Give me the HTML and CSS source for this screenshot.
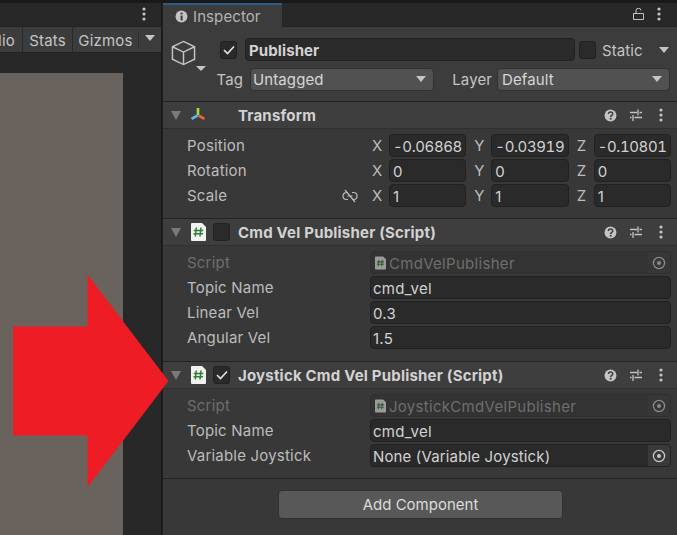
FILE: index.html
```html
<!DOCTYPE html>
<html lang="en">
  <head>
    <meta charset="UTF-8" />
    <title>Inspector</title>
    <link rel="stylesheet" href="styles.css">
  </head>
  <body>
    <svg class="defs">
      <symbol id="kebab" viewBox="0 0 12 16"><circle cx="6" cy="3" r="1.6"/><circle cx="6" cy="8" r="1.6"/><circle cx="6" cy="13" r="1.6"/></symbol>
      <symbol id="sliders" viewBox="0 0 14 14"><path d="M1 4.500h7M10.500 4.500h2.500M9 1.500v6M1 9.500h1.500M5.500 9.500h7.500M4 7v6" fill="none" stroke="currentColor" stroke-width="1.300"/></symbol>
      <symbol id="help" viewBox="0 0 14 14"><circle cx="7" cy="7" r="6.400"/><path d="M4.800 5.500c0-3 4.600-3 4.600-.2 0 1.600-2.200 1.700-2.200 3.200" fill="none" stroke="#3e3e3e" stroke-width="1.700"/><rect x="6.200" y="9.500" width="2" height="1.900" fill="#3e3e3e"/></symbol>
      <symbol id="target" viewBox="0 0 14 14"><circle cx="7" cy="7" r="5.600" fill="none" stroke="currentColor" stroke-width="1.300"/><circle cx="7" cy="7" r="2"/></symbol>
      <symbol id="script" viewBox="0 0 15 18"><path d="M1 0h10l4 4v13a1 1 0 0 1-1 1H1a1 1 0 0 1-1-1V1a1 1 0 0 1 1-1z" fill="#f1f1ee"/><path d="M5.300 4.500l-1 9M10 4.500l-1 9M2.800 7.400h9.500M2.500 10.800h9.500" fill="none" stroke="#2f7d3a" stroke-width="1.500"/></symbol>
    </svg>

    <div class="scene-panel">
      <div class="tab-strip">
        <svg class="kebab-icon"><use href="#kebab"/></svg>
      </div>
      <div class="game-bar">
        <span class="bar-btn audio">dio</span>
        <span class="bar-btn stats">Stats</span>
        <span class="bar-btn gizmos">Gizmos</span>
        <span class="bar-sep"></span>
        <span class="bar-arrow"><i class="tri"></i></span>
      </div>
      <div class="game-view">
        <div class="game-image"></div>
      </div>
    </div>

    <div class="inspector">
      <div class="tab-strip">
        <div class="tab">
          <svg class="info-icon" viewBox="0 0 14 14"><circle cx="7" cy="7" r="6.400"/><rect x="6" y="2.800" width="2.200" height="2" fill="#3c3c3c"/><rect x="6" y="6" width="2.200" height="5.200" fill="#3c3c3c"/></svg>
          <span>Inspector</span>
        </div>
        <div class="tab-tools">
          <svg class="lock-icon" viewBox="0 0 11 12"><path d="M.5 5.500h10v6H.5zM3 5.500V3a2.500 2.500 0 0 1 5-.6" fill="none" stroke="currentColor"/></svg>
          <svg class="kebab-icon"><use href="#kebab"/></svg>
        </div>
      </div>

      <div class="object-head">
        <div class="object-icon">
          <svg class="cube" viewBox="0 0 26 27"><path d="M13 1.500l11.500 5.500v13L13 25.500 1.500 20V7zM1.500 7L13 12.500 24.500 7M13 12.500v13" fill="none" stroke="currentColor" stroke-width="1.500"/></svg>
          <i class="tri small"></i>
        </div>
        <div class="object-rows">
          <div class="name-row">
            <span class="check on"><svg viewBox="0 0 12 10"><path d="M1 5l3.500 3.500L11 1.500" fill="none" stroke="currentColor" stroke-width="1.600"/></svg></span>
            <span class="field name-field">Publisher</span>
            <span class="check"></span>
            <span class="static-label">Static</span>
            <i class="tri"></i>
          </div>
          <div class="tag-row">
            <label class="tag-label">Tag</label>
            <span class="select tag-select">Untagged<i class="tri"></i></span>
            <label class="layer-label">Layer</label>
            <span class="select layer-select">Default<i class="tri"></i></span>
          </div>
        </div>
      </div>

      <section class="component transform">
        <header class="comp-head">
          <i class="fold"></i>
          <svg class="axis-icon" viewBox="0 0 16 16"><path d="M8 1v7" stroke="#a4e03c" stroke-width="2.600"/><path d="M8.500 8.500l6 3.300" stroke="#e8673a" stroke-width="2.600"/><path d="M7.500 8.500l-6 3.300" stroke="#5cb8ea" stroke-width="2.600"/></svg>
          <h2 class="comp-title">Transform</h2>
          <div class="comp-tools">
            <svg class="help-icon"><use href="#help"/></svg>
            <svg class="slide-icon"><use href="#sliders"/></svg>
            <svg class="kebab-icon"><use href="#kebab"/></svg>
          </div>
        </header>
        <div class="comp-body">
          <div class="row">
            <label>Position</label>
            <div class="vector">
              <div class="axis"><b>X</b><span class="field"><span class="clip">-0.068689</span></span></div>
              <div class="axis"><b>Y</b><span class="field"><span class="clip">-0.039193</span></span></div>
              <div class="axis"><b>Z</b><span class="field"><span class="clip">-0.108019</span></span></div>
            </div>
          </div>
          <div class="row">
            <label>Rotation</label>
            <div class="vector">
              <div class="axis"><b>X</b><span class="field">0</span></div>
              <div class="axis"><b>Y</b><span class="field">0</span></div>
              <div class="axis"><b>Z</b><span class="field">0</span></div>
            </div>
          </div>
          <div class="row">
            <label>Scale
              <svg class="link-icon" viewBox="0 0 16 14"><path d="M6 3.500H4.500a3.500 3.500 0 0 0 0 7H6M10 3.500h1.500a3.500 3.500 0 0 1 0 7H10M3 1l10 12M5.500 7h5" fill="none" stroke="currentColor" stroke-width="1.200"/></svg>
            </label>
            <div class="vector">
              <div class="axis"><b>X</b><span class="field">1</span></div>
              <div class="axis"><b>Y</b><span class="field">1</span></div>
              <div class="axis"><b>Z</b><span class="field">1</span></div>
            </div>
          </div>
        </div>
      </section>

      <section class="component">
        <header class="comp-head">
          <i class="fold"></i>
          <svg class="script-icon"><use href="#script"/></svg>
          <span class="check"></span>
          <h2 class="comp-title">Cmd Vel Publisher (Script)</h2>
          <div class="comp-tools">
            <svg class="help-icon"><use href="#help"/></svg>
            <svg class="slide-icon"><use href="#sliders"/></svg>
            <svg class="kebab-icon"><use href="#kebab"/></svg>
          </div>
        </header>
        <div class="comp-body wide">
          <div class="row muted">
            <label>Script</label>
            <span class="field object">
              <svg class="mini-script"><use href="#script"/></svg>CmdVelPublisher
              <span class="picker"><svg class="target-icon"><use href="#target"/></svg></span>
            </span>
          </div>
          <div class="row"><label>Topic Name</label><span class="field">cmd_vel</span></div>
          <div class="row"><label>Linear Vel</label><span class="field">0.3</span></div>
          <div class="row"><label>Angular Vel</label><span class="field">1.5</span></div>
        </div>
      </section>

      <section class="component">
        <header class="comp-head">
          <i class="fold"></i>
          <svg class="script-icon"><use href="#script"/></svg>
          <span class="check on"><svg viewBox="0 0 12 10"><path d="M1 5l3.500 3.500L11 1.500" fill="none" stroke="currentColor" stroke-width="1.600"/></svg></span>
          <h2 class="comp-title">Joystick Cmd Vel Publisher (Script)</h2>
          <div class="comp-tools">
            <svg class="help-icon"><use href="#help"/></svg>
            <svg class="slide-icon"><use href="#sliders"/></svg>
            <svg class="kebab-icon"><use href="#kebab"/></svg>
          </div>
        </header>
        <div class="comp-body">
          <div class="row muted">
            <label>Script</label>
            <span class="field object">
              <svg class="mini-script"><use href="#script"/></svg>JoystickCmdVelPublisher
              <span class="picker"><svg class="target-icon"><use href="#target"/></svg></span>
            </span>
          </div>
          <div class="row"><label>Topic Name</label><span class="field">cmd_vel</span></div>
          <div class="row">
            <label>Variable Joystick</label>
            <span class="field object">None (Variable Joystick)
              <span class="picker"><svg class="target-icon"><use href="#target"/></svg></span>
            </span>
          </div>
        </div>
      </section>

      <div class="add-row">
        <span class="add-btn">Add Component</span>
      </div>
    </div>

    <svg class="big-arrow" viewBox="0 0 156 212"><path d="M75 2L155 107 75 212V161H0V53H75z" fill="#ee1c25" stroke="#ee1c25" stroke-width="1" stroke-linejoin="round"/></svg>
  </body>
</html>
```

FILE: styles.css
```css
* {
  box-sizing: border-box;
}
html, body {
  height: 100%;
}
body {
  margin: 0;
  display: flex;
  overflow: hidden;
  height: 535px;
  background-color: #191919;
  color: #c4c4c4;
  font-family: Inter, "Noto Sans", sans-serif;
  font-size: 15px;
  padding-top: 3px;
  gap: 1px;
  position: relative;
}
.defs {
  display: none;
}
i {
  display: block;
}
.tri {
  width: 0;
  height: 0;
  flex: none;
  border-left: 5px solid transparent;
  border-right: 5px solid transparent;
  border-top: 6px solid #c4c4c4;
}
.tri.small {
  border-top-width: 5px;
}

/* left panel */
.scene-panel {
  width: 161px;
  flex: none;
  display: flex;
  flex-direction: column;
  background-color: #282828;
}
.tab-strip {
  height: 24px;
  flex: none;
  display: flex;
  justify-content: flex-end;
  align-items: center;
  padding-bottom: 2px;
  background-color: #282828;
  border-bottom: 1px solid #232323;
}
.scene-panel .tab-strip {
  padding-right: 11px;
}
.kebab-icon {
  width: 12px;
  height: 16px;
  flex: none;
  fill: #c4c4c4;
}
.game-bar {
  height: 26px;
  flex: none;
  display: flex;
  background-color: #3c3c3c;
  border-bottom: 1px solid #232323;
  align-items: stretch;
  color: #c4c4c4;
}
.bar-btn {
  display: flex;
  align-items: center;
  padding-top: 1px;
  border-right: 1px solid #2a2a2a;
  letter-spacing: .2px;
}
.audio {
  width: 23px;
  justify-content: flex-end;
  padding-right: 7px;
}
.stats {
  width: 50px;
  justify-content: center;
}
.gizmos {
  width: 65px;
  justify-content: center;
  border-right: none;
}
.bar-sep {
  width: 1px;
  height: 14px;
  margin-top: 6px;
  background-color: #2a2a2a;
}
.bar-arrow {
  flex: 1;
  display: flex;
  align-items: center;
  justify-content: center;
}
.bar-arrow .tri {
  margin-bottom: 3px;
}
.game-view {
  flex: 1;
  padding-top: 20px;
}
.game-image {
  width: 123px;
  height: 100%;
  background-color: #6a635d;
}

/* inspector */
.inspector {
  flex: 1;
  min-width: 0;
  display: flex;
  flex-direction: column;
  background-color: #383838;
  border-left: 1px solid #1f1f1f;
}
.inspector .tab-strip {
  justify-content: space-between;
  padding: 0 12px 0 0;
}
.tab {
  width: 119px;
  height: 24px;
  display: flex;
  align-items: center;
  gap: 5px;
  padding-left: 12px;
  background-color: #3c3c3c;
  border-top: 2px solid #2c5d87;
  color: #b4b4b4;
  margin-bottom: -1px;
  letter-spacing: .1px;
}
.info-icon {
  width: 13px;
  height: 13px;
  fill: #c4c4c4;
}
.tab-tools {
  display: flex;
  align-items: center;
  gap: 9px;
  margin-bottom: 2px;
  color: #c4c4c4;
}
.lock-icon {
  width: 11px;
  height: 12px;
}
.object-head {
  height: 75px;
  flex: none;
  display: flex;
  background-color: #3c3c3c;
  border-bottom: 1px solid #232323;
  padding: 11px 6px 0 8px;
}
.object-icon {
  width: 42px;
  flex: none;
  color: #c4c4c4;
  padding-top: 2px;
  position: relative;
}
.cube {
  width: 25px;
  height: 26px;
  display: block;
}
.object-icon .tri {
  position: absolute;
  left: 25px;
  top: 28px;
}
.object-rows {
  flex: 1;
  min-width: 0;
  display: flex;
  flex-direction: column;
  gap: 7px;
}
.name-row, .tag-row {
  display: flex;
  align-items: center;
}
.name-row {
  height: 23px;
  padding-left: 7px;
}
.check {
  width: 17px;
  height: 18px;
  flex: none;
  display: flex;
  align-items: center;
  justify-content: center;
  background-color: #2a2a2a;
  border: 1px solid #212121;
  border-radius: 3px;
  color: #e4e4e4;
}
.check svg {
  width: 12px;
  height: 10px;
}
.field {
  flex: 1;
  min-width: 0;
  height: 23px;
  display: flex;
  align-items: center;
  padding: 1px 2px 0;
  background-color: #2a2a2a;
  border: 1px solid #212121;
  border-radius: 4px;
  white-space: nowrap;
  overflow: hidden;
  color: #d2d2d2;
  letter-spacing: .25px;
}
.name-field {
  margin: 0 4px 0 8px;
  font-weight: 700;
  padding-left: 3px;
  letter-spacing: .1px;
}
.static-label {
  width: 57px;
  margin-left: 6px;
  padding-top: 1px;
  letter-spacing: .1px;
}
.name-row .tri {
  margin-right: 2px;
}
.tag-row {
  height: 23px;
}
.tag-label {
  width: 37px;
  text-align: right;
  padding-right: 7px;
  letter-spacing: .1px;
}
.layer-label {
  width: 63px;
  padding-right: 5px;
  text-align: right;
  letter-spacing: .1px;
}
.select {
  height: 23px;
  display: flex;
  align-items: center;
  justify-content: space-between;
  padding: 0 7px 1px 2px;
  background-color: #515151;
  border: 1px solid #303030;
  border-radius: 4px;
  color: #d6d6d6;
  letter-spacing: .1px;
}
.tag-select {
  width: 184px;
}
.layer-select {
  width: 173px;
  padding-left: 4px;
}
.component {
  flex: none;
  border-bottom: 1px solid #232323;
}
.comp-head {
  height: 27px;
  display: flex;
  align-items: center;
  padding: 0 10px 0 8px;
  background-color: #3e3e3e;
  border-bottom: 1px solid #303030;
}
.fold {
  width: 0;
  height: 0;
  flex: none;
  border-left: 5px solid transparent;
  border-right: 5px solid transparent;
  border-top: 9px solid #7a7a7a;
}
.axis-icon {
  width: 16px;
  height: 16px;
  margin-left: 9px;
}
.script-icon {
  width: 15px;
  height: 18px;
  flex: none;
  margin-left: 10px;
}
.comp-head .check {
  margin-left: 7px;
}
.comp-title {
  margin: 0;
  flex: 1;
  font-size: 15px;
  font-weight: 700;
  color: #d2d2d2;
  padding-left: 8px;
  letter-spacing: .2px;
  white-space: nowrap;
}
.transform .comp-title {
  padding-left: 32px;
}
.comp-tools {
  display: flex;
  align-items: center;
  gap: 12px;
  color: #c4c4c4;
}
.help-icon {
  width: 13px;
  height: 13px;
  fill: #c4c4c4;
}
.slide-icon {
  width: 14px;
  height: 14px;
}
.comp-body {
  display: flex;
  flex-direction: column;
  gap: 2px;
  padding: 5px 6px 11px 24px;
}
.comp-body.wide {
  padding-bottom: 12px;
}
.row {
  display: flex;
  align-items: center;
  height: 23px;
}
.row label {
  width: 183px;
  flex: none;
  display: flex;
  align-items: center;
  justify-content: space-between;
  padding-right: 12px;
  color: #bcbcbc;
  letter-spacing: .2px;
}
.row.muted label {
  color: #6e6e6e;
}
.vector {
  flex: 1;
  min-width: 0;
  display: grid;
  grid-template-columns: repeat(3, 1fr);
  gap: 6px;
}
.axis {
  display: flex;
  align-items: center;
  min-width: 0;
}
.axis b {
  width: 19px;
  font-weight: 400;
  padding-left: 2px;
  color: #bcbcbc;
}
.axis .field {
  padding: 1px 3px 0;
}
.clip {
  display: block;
  overflow: hidden;
  font-feature-settings: "tnum";
  letter-spacing: -.4px;
}
.link-icon {
  width: 16px;
  height: 14px;
}
.object {
  padding-right: 0;
  letter-spacing: .15px;
}
.row.muted .object {
  color: #6e6e6e;
  background-color: #333333;
  border-color: #2f2f2f;
  letter-spacing: .3px;
}
.row.muted .picker {
  background-color: #373737;
  color: #8a8a8a;
}
.picker {
  margin: -1px 0 0 auto;
  width: 22px;
  height: 21px;
  flex: none;
  display: flex;
  align-items: center;
  justify-content: center;
  background-color: #3a3a3a;
  color: #c8c8c8;
}
.target-icon {
  width: 14px;
  height: 14px;
  fill: currentColor;
}
.mini-script {
  width: 11px;
  height: 14px;
  flex: none;
  margin: 0 3px 0 2px;
  opacity: .55;
}
.add-row {
  display: flex;
  justify-content: center;
  padding: 11px 0 0 1px;
}
.add-btn {
  width: 285px;
  height: 29px;
  display: flex;
  align-items: center;
  justify-content: center;
  background-color: #585858;
  border: 1px solid #303030;
  border-radius: 4px;
  color: #dcdcdc;
}

/* arrow drawn over the screenshot */
.big-arrow {
  position: absolute;
  left: 13px;
  top: 274px;
  width: 156px;
  height: 212px;
}
```
